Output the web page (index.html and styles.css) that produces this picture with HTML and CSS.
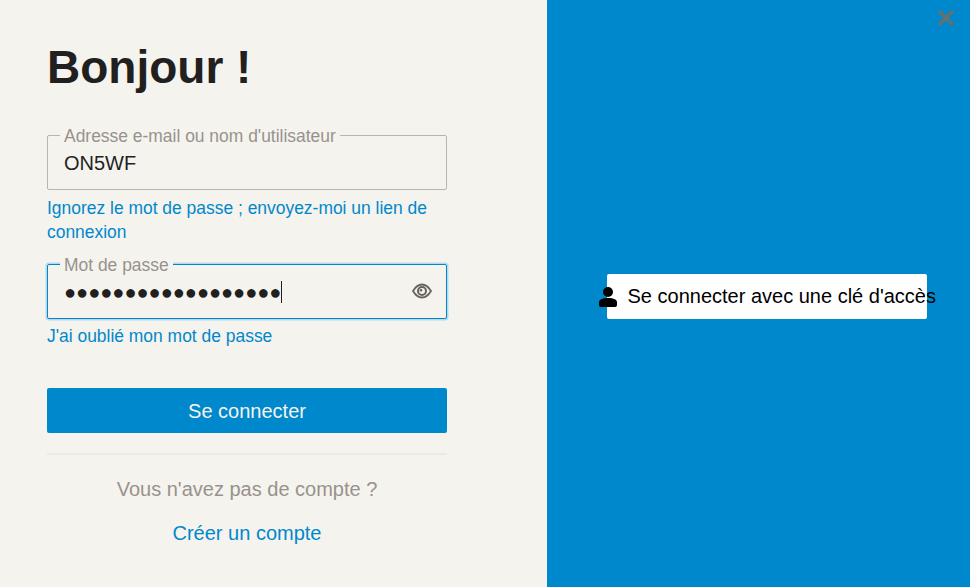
FILE: index.html
```html
<!DOCTYPE html>
<html lang="fr">
<head>
<meta charset="utf-8">
<title>Bonjour !</title>
<link rel="stylesheet" href="styles.css">
</head>
<body>
<main class="dialog">
  <section class="form-pane">
    <h1 class="title">Bonjour !</h1>
    <div class="field">
      <span class="field-label">Adresse e-mail ou nom d'utilisateur</span>
      <div class="field-value">ON5WF</div>
    </div>
    <a class="link link-magic">Ignorez le mot de passe ; envoyez-moi un lien de connexion</a>
    <div class="field field-focus">
      <span class="field-label">Mot de passe</span>
      <div class="field-value password-row">
        <span class="dots">●●●●●●●●●●●●●●●●●●</span><span class="caret"></span>
        <svg class="eye" viewBox="0 0 20 20" width="20" height="20" fill="none" stroke="#67625e">
          <path d="M1 10C3.500 5.800 6.500 3.500 10 3.500s6.500 2.300 9 6.500c-2.500 4.200-5.500 6.500-9 6.500S3.500 14.200 1 10z" stroke-width="1.800"/>
          <circle cx="10" cy="10" r="4" stroke-width="2"/>
          <circle cx="9" cy="9.200" r="1.300" fill="#67625e" stroke="none"/>
        </svg>
      </div>
    </div>
    <a class="link link-forgot">J'ai oublié mon mot de passe</a>
    <button class="submit" type="button">Se connecter</button>
    <hr class="divider">
    <p class="no-account">Vous n'avez pas de compte ?</p>
    <a class="link create">Créer un compte</a>
  </section>
  <section class="side-pane">
    <button class="passkey" type="button">
      <svg class="passkey-icon" viewBox="0 0 18 20" width="18" height="20" fill="#000">
        <circle cx="9" cy="5" r="5"/>
        <path d="M0 18v-2.500C0 12.500 3 11 9 11s9 1.500 9 4.500V18c0 1.200-.8 2-2 2H2c-1.200 0-2-.8-2-2z"/>
      </svg>
      <span class="passkey-text">Se connecter avec une clé d'accès</span>
    </button>
    <svg class="close" viewBox="0 0 18 18" width="18" height="18" stroke="#67706f" stroke-width="3.200">
      <path d="M2 2l14 14M16 2L2 16"/>
    </svg>
  </section>
</main>
</body>
</html>
```
FILE: styles.css
```css
* { box-sizing: border-box; }
html, body { margin: 0; height: 100%; }
body { font-family: "Liberation Sans", Arial, sans-serif; overflow: hidden; }
.dialog { display: flex; width: 970px; height: 587px; }
.form-pane { width: 547px; height: 587px; background: #f5f3ee; padding: 40px 100px 0 47px; display: flex; flex-direction: column; }
.title { margin: 0 0 40px; font-size: 46px; line-height: 55px; font-weight: 700; color: #221f1f; }
.field { position: relative; height: 55px; padding: 15px 16px 0; border: 1px solid #b8b5b1; border-radius: 2px; }
.field-label { position: absolute; top: -9px; left: 12px; padding: 0 4px; background: #f5f3ee; font-size: 17.450px; line-height: 18px; color: #98928d; white-space: nowrap; }
.field-value { font-size: 20px; line-height: 24px; color: #221f1f; }
.link { display: block; color: #0088cc; font-size: 17.450px; line-height: 24px; }
.link-magic { margin-top: 6px; height: 49px; }
.field-focus { margin-top: 19px; border-color: #0088cc; box-shadow: 0 0 0 1.500px #b5d9ea; }
.password-row { display: flex; align-items: center; height: 24px; }
.dots { font-size: 20px; color: #221f1f; }
.caret { width: 1px; height: 22px; background: #221f1f; }
.eye { margin-left: auto; margin-right: -1px; position: relative; left: 1px; top: -1px; }
.link-forgot { margin-top: 5px; }
.submit { margin-top: 40px; height: 45px; padding: 2px 0 0; border: 0; border-radius: 2px; background: #0088cc; color: #f5f3ee; font: 20px "Liberation Sans", Arial, sans-serif; }
.divider { margin: 20px 0 0; height: 2px; border: 0; background: #ebe9e5; }
.no-account { margin: 22px 0 0; text-align: center; font-size: 20px; line-height: 24px; color: #98928d; }
.create { margin-top: 20px; text-align: center; font-size: 20px; }
.side-pane { position: relative; flex: 1; background: #0088cc; display: flex; align-items: flex-start; padding: 274px 0 0 60px; }
.passkey { width: 320px; height: 45px; padding: 0; border: 0; border-radius: 2px; background: #fff; color: #000; display: flex; align-items: center; white-space: nowrap; font: 20px "Liberation Sans", Arial, sans-serif; }
.passkey-icon { margin-left: -8px; flex: none; }
.passkey-text { margin-left: 10.500px; }
.close { position: absolute; top: 9px; right: 15px; }
```
